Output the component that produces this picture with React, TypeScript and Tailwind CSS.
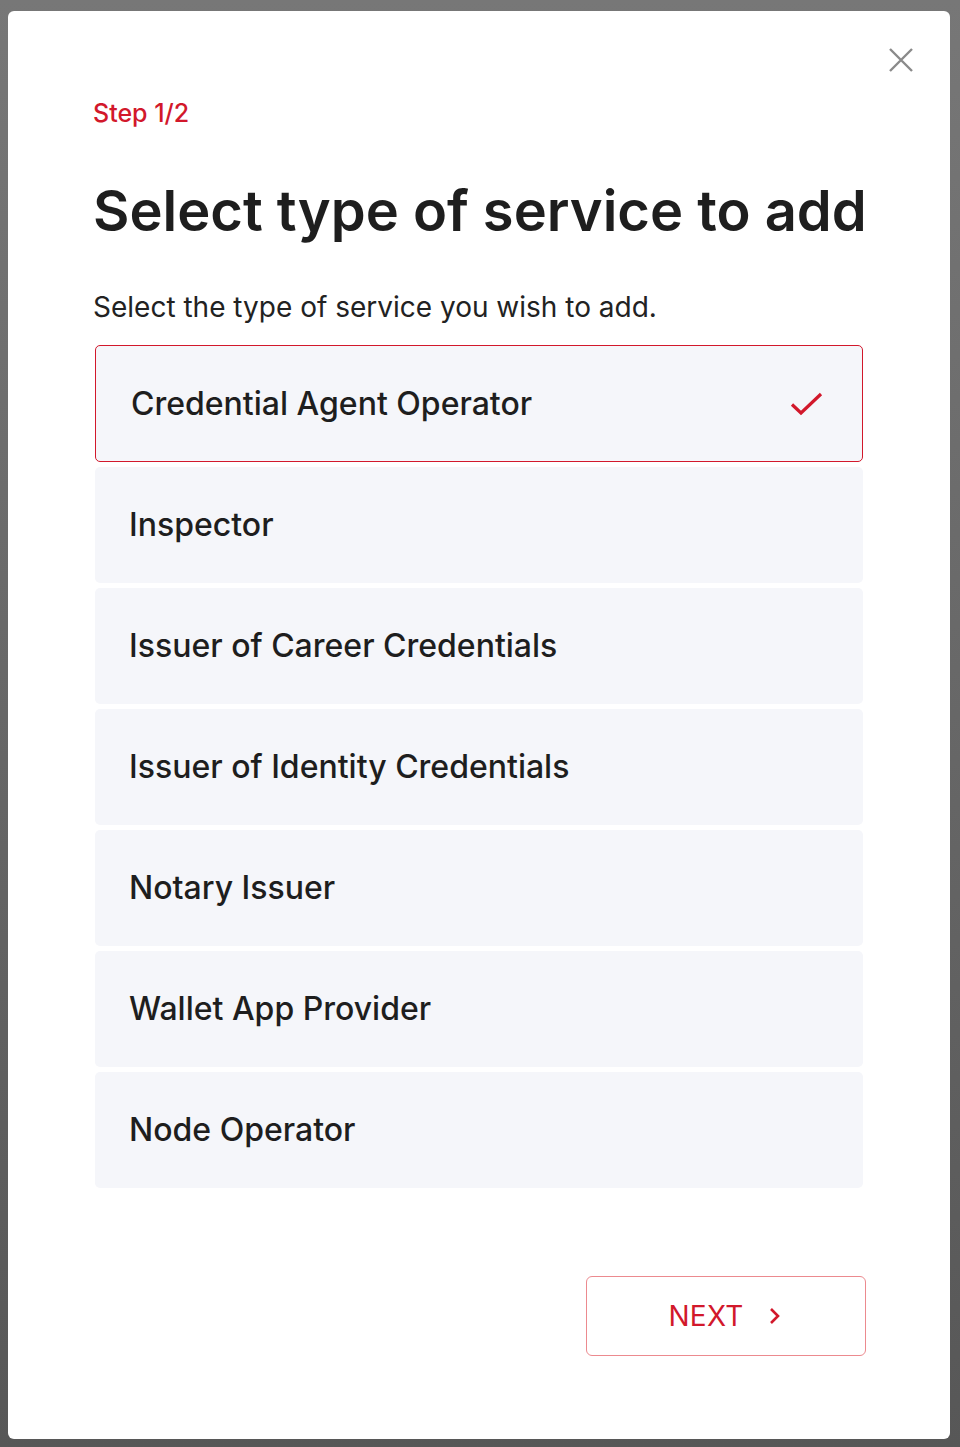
import React, { useState } from "react";

const services = [
  "Credential Agent Operator",
  "Inspector",
  "Issuer of Career Credentials",
  "Issuer of Identity Credentials",
  "Notary Issuer",
  "Wallet App Provider",
  "Node Operator",
];

const App: React.FC = () => {
  const [selected, setSelected] = useState(0);

  return (
    <div
      className="min-h-[1447px] bg-gradient-to-b from-[#777777] to-[#575757] pt-[11px] pl-[8px] pr-[10px] pb-[8px]"
      style={{ fontFamily: "Inter, 'Noto Sans', sans-serif" }}
    >
      <div className="relative h-[1428px] w-[942px] rounded-[6px] bg-white pl-[85px] pr-[85px] pt-[86px]">
        {/* close */}
        <button className="absolute right-[36px] top-[36px] text-[#8a8a8a]">
          <svg width="26" height="26" viewBox="0 0 26 26" fill="none" stroke="currentColor" strokeWidth="2.4">
            <path d="M2 2L24 24M24 2L2 24" />
          </svg>
        </button>

        <div className="text-[25px] font-medium leading-[32px] text-[#d2182b]">Step 1/2</div>

        <h1 className="mt-[48px] whitespace-nowrap text-[56px] font-semibold leading-[68px] text-[#1e1e1e]">
          Select type of service to add
        </h1>

        <p className="mt-[44px] text-[28px] leading-[36px] text-[#222]">
          Select the type of service you wish to add.
        </p>

        <div className="mt-[20px] ml-[2px] flex w-[768px] flex-col gap-[5px]">
          {services.map((s, i) => (
            <div
              key={s}
              onClick={() => setSelected(i)}
              className={
                i === selected
                  ? "flex h-[117px] items-center justify-between rounded-[5px] border border-[#d2182b] bg-[#f5f6fa] pl-[35px] pr-[38px]"
                  : "flex h-[116px] items-center justify-between rounded-[5px] bg-[#f5f6fa] pl-[34px] pr-[38px]"
              }
            >
              <span className="text-[32px] font-medium text-[#1e1e1e]">{s}</span>
              {i === selected && (
                <svg width="34" height="26" viewBox="0 0 34 26" fill="none" stroke="#d2182b" strokeWidth="3.2">
                  <path d="M2 13.5L11 22L31 3" />
                </svg>
              )}
            </div>
          ))}
        </div>

        <div className="mt-[88px] flex justify-end">
          <button className="-mr-[1px] flex h-[80px] w-[280px] items-center justify-center gap-[24px] rounded-[6px] border border-[#ec8a8f] bg-white pr-[2px]">
            <span className="text-[28px] font-normal tracking-[0.3px] text-[#d2182b]">NEXT</span>
            <svg width="14" height="18" viewBox="0 0 14 18" fill="none" stroke="#d2182b" strokeWidth="2.6">
              <path d="M3 2L10 9L3 16" />
            </svg>
          </button>
        </div>
      </div>
    </div>
  );
};

export default App;
